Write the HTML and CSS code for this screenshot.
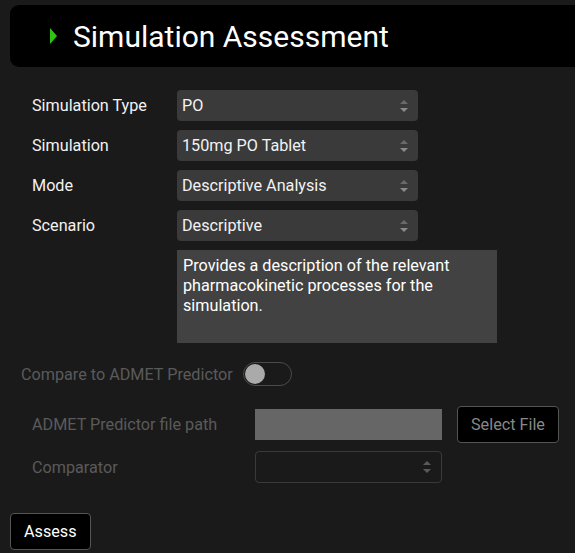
FILE: index.html
```html
<!DOCTYPE html>
<html lang="en">
<head>
    <meta charset="UTF-8">
    <meta name="viewport" content="width=device-width, initial-scale=1.0">
    <title>Simulation Assessment</title>
    <link rel="stylesheet" href="styles.css">
</head>
<body>
    <header class="page-header">
        <span class="caret"></span>
        <h1>Simulation Assessment</h1>
    </header>

    <div class="settings">
        <label class="field-label">Simulation Type</label>
        <div class="select">PO<span class="spinner"></span></div>

        <label class="field-label">Simulation</label>
        <div class="select">150mg PO Tablet<span class="spinner"></span></div>

        <label class="field-label">Mode</label>
        <div class="select">Descriptive Analysis<span class="spinner"></span></div>

        <label class="field-label">Scenario</label>
        <div class="select">Descriptive<span class="spinner"></span></div>

        <div></div>
        <div class="description">Provides a description of the relevant pharmacokinetic processes for the simulation.</div>
    </div>

    <div class="compare">
        <span class="compare-label">Compare to ADMET Predictor</span>
        <span class="toggle"><span class="knob"></span></span>
    </div>

    <div class="admet">
        <label class="field-label muted">ADMET Predictor file path</label>
        <div class="file-path"></div>
        <button class="btn btn-muted">Select File</button>

        <label class="field-label muted">Comparator</label>
        <div class="select select-empty"><span class="spinner"></span></div>
    </div>

    <div class="actions">
        <button class="btn">Assess</button>
    </div>
</body>
</html>
```

FILE: styles.css
```css
:root {
    --bg: #1a1a1a;
    --panel: #000;
    --field: #3a3a3a;
    --text: #f2f2f2;
    --muted: #5a5a5a;
    --accent: #2fc40f;
}

body {
    margin: 0;
    background-color: var(--bg);
    color: var(--text);
    font-family: Roboto, "Liberation Sans", sans-serif;
    font-size: 16.2px;
    overflow: hidden;
}

.page-header {
    display: flex;
    align-items: center;
    gap: 16px;
    height: 62px;
    margin: 5px -20px 0 10px;
    padding-left: 40px;
    background-color: var(--panel);
    border-radius: 9px;
}

.caret {
    width: 0;
    height: 0;
    border-top: 8px solid transparent;
    border-bottom: 8px solid transparent;
    border-left: 7px solid var(--accent);
}

.page-header h1 {
    margin: 0;
    font-size: 30px;
    font-weight: 400;
    color: #fff;
}

.settings {
    display: grid;
    grid-template-columns: 145px 241px;
    row-gap: 9px;
    margin: 23px 0 0 32px;
}

.field-label {
    display: flex;
    align-items: center;
    height: 31px;
}

.select {
    position: relative;
    display: flex;
    align-items: center;
    height: 31px;
    padding: 0 5px;
    background-color: var(--field);
    border-radius: 4px;
}

.spinner {
    position: absolute;
    right: 10px;
    top: 50%;
    width: 8px;
    height: 12px;
    margin-top: -6px;
}

.spinner::before,
.spinner::after {
    content: "";
    position: absolute;
    left: 0;
    border-left: 4px solid transparent;
    border-right: 4px solid transparent;
}

.spinner::before {
    top: 0;
    border-bottom: 4px solid #6a6a6a;
}

.spinner::after {
    bottom: 0;
    border-top: 4px solid #8a8a8a;
}

.description {
    width: 320px;
    height: 93px;
    box-sizing: border-box;
    padding: 6px 6px;
    background-color: #424242;
    line-height: 20px;
    color: #fff;
}

.compare {
    display: flex;
    align-items: center;
    gap: 10px;
    margin: 19px 0 0 21px;
}

.compare-label {
    color: var(--muted);
}

.toggle {
    position: relative;
    width: 47px;
    height: 22px;
    border: 1.5px solid #4a4a4a;
    border-radius: 12px;
}

.knob {
    position: absolute;
    left: 1px;
    top: 1px;
    width: 20px;
    height: 20px;
    border-radius: 50%;
    background-color: #aaa;
}

.admet {
    display: grid;
    grid-template-columns: 223px 187px auto;
    align-items: center;
    row-gap: 8px;
    margin: 20px 0 0 32px;
}

.muted {
    color: var(--muted);
}

.file-path {
    height: 31px;
    background-color: #666;
}

.btn {
    font-family: inherit;
    font-size: 16.2px;
    color: #fff;
    background-color: #000;
    border: 1px solid #555;
    border-radius: 4px;
    height: 37px;
    padding: 0 13px;
    cursor: pointer;
}

.btn-muted {
    justify-self: start;
    margin-left: 15px;
    color: #888;
}

.select-empty {
    background-color: transparent;
    border: 1px solid #3a3a3a;
    box-sizing: border-box;
    height: 32px;
}

.select-empty .spinner::before {
    border-bottom-color: #5a5a5a;
}

.select-empty .spinner::after {
    border-top-color: #5a5a5a;
}

.actions {
    margin: 30px 0 0 10px;
}
```
